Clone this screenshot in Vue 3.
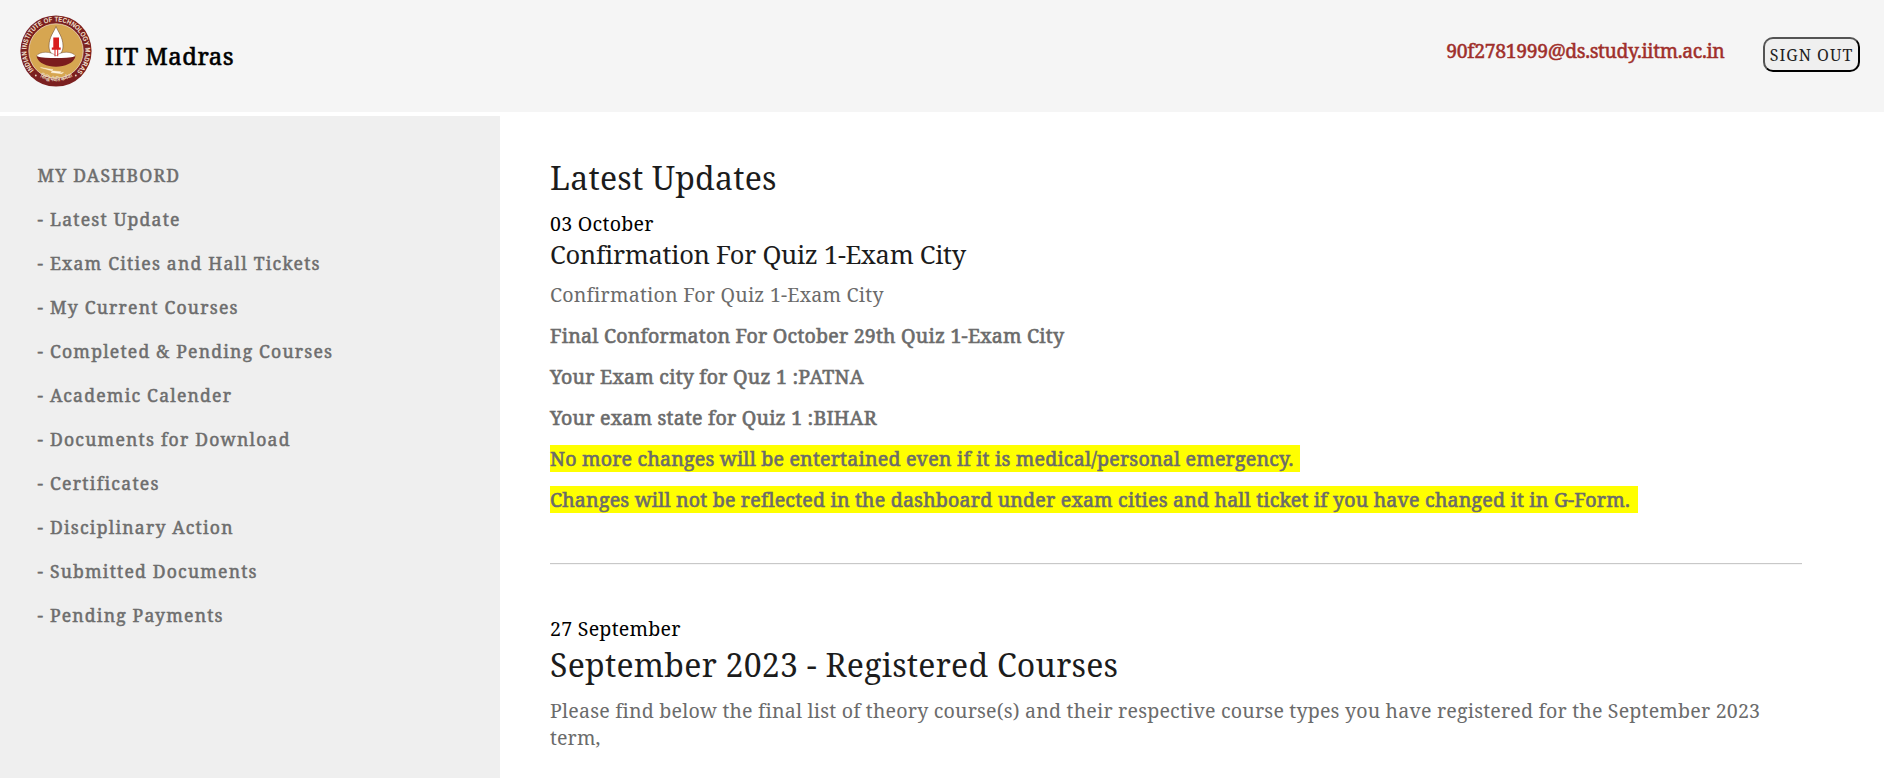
<script setup>
const menu = [
  { label: 'MY DASHBORD', width: 141.5 },
  { label: '- Latest Update', width: 142 },
  { label: '- Exam Cities and Hall Tickets', width: 282 },
  { label: '- My Current Courses', width: 200 },
  { label: '- Completed & Pending Courses', width: 294.5 },
  { label: '- Academic Calender', width: 193.5 },
  { label: '- Documents for Download', width: 252 },
  { label: '- Certificates', width: 120.5 },
  { label: '- Disciplinary Action', width: 195 },
  { label: '- Submitted Documents', width: 219 },
  { label: '- Pending Payments', width: 185 },
]

const notices = [
  { text: 'Confirmation For Quiz 1-Exam City', width: 333 },
  { text: 'Final Conformaton For October 29th Quiz 1-Exam City', width: 514, bold: true },
  { text: 'Your Exam city for Quz 1 :PATNA', width: 313.5, bold: true },
  { text: 'Your exam state for Quiz 1 :BIHAR', width: 326.5, bold: true },
  { text: 'No more changes will be entertained even if it is medical/personal emergency.', width: 743.5, bold: true, mark: 'short' },
  { text: 'Changes will not be reflected in the dashboard under exam cities and hall ticket if you have changed it in G-Form.', width: 1079.5, bold: true, mark: 'long' },
]

// Tracks the text so that it spans the given width.
const vFit = {
  mounted(el, { value }) {
    const range = document.createRange()
    range.selectNodeContents(el)
    const natural = range.getBoundingClientRect().width
    el.style.letterSpacing = (value - natural) / (el.textContent.length - 1) + 'px'
  },
}
</script>

<template>
  <div class="page">
    <header class="top">
      <div class="brand">
        <svg class="logo" viewBox="0 0 72 72" width="72" height="72">
          <defs>
            <path id="ring" d="M14.500 56A29.400 29.400 0 1 1 57.500 56" />
            <path id="ringLow" d="M18.500 61A31 31 0 0 0 53.500 61" />
          </defs>
          <circle cx="36" cy="36" r="35.600" fill="#7b2020" />
          <circle cx="36" cy="36" r="27.200" fill="#d6a651" stroke="#ead7bd" stroke-width=".8" />
          <text class="seal"><textPath href="#ring" startOffset="1" textLength="136" lengthAdjust="spacingAndGlyphs">INDIAN INSTITUTE OF TECHNOLOGY MADRAS</textPath></text>
          <text class="motto"><textPath href="#ringLow" startOffset="2" textLength="34" lengthAdjust="spacingAndGlyphs">सिद्धिर्भवति कर्मजा</textPath></text>
          <circle cx="15.800" cy="60.500" r=".9" fill="#ead7bd" />
          <circle cx="55.800" cy="60.500" r=".9" fill="#ead7bd" />
          <path d="M36 11.500C34 17 29 22 29 31c0 6 3 9 7 11 4-2 7-5 7-11 0-9-5-14-7-19.500z" fill="#fff" stroke="#5f3a22" stroke-width=".5" />
          <path d="M16.500 41c3-5 15-5 19.500 0 4.500-5 16.500-5 19.500 0l-8 4H24z" fill="#fff" stroke="#5f3a22" stroke-width=".4" />
          <path d="M16.500 41.500c10 2 29 2 39 0C52 55 20 55 16.500 41.500z" fill="#7b1d1d" />
          <path d="M33.300 22.500h5.700v10h1.700v2.200H38.200v6.500h-1v-6.500h-1.700v6.500h-1v-6.500H31.800v-2.200h1.500z" fill="#d81e1e" />
          <path d="M20.500 52.500l12.500 2.200-1.500 1 9.500 1-1.500 1.500 4-1-1.500 1.500-11-1.200 1.500-1.400z" fill="#fff4df" stroke="#fff4df" stroke-width=".4" />
        </svg>
        <div v-fit="128.5" class="name">IIT Madras</div>
      </div>
      <div class="account">
        <div v-fit="278.5" class="email">90f2781999@ds.study.iitm.ac.in</div>
        <button class="signout"><span v-fit="82.5">SIGN OUT</span></button>
      </div>
    </header>

    <div class="body">
      <nav class="side">
        <a v-for="item in menu" :key="item.label"><span v-fit="item.width">{{ item.label }}</span></a>
      </nav>
      <main class="content">
        <h1><span v-fit="226.5">Latest Updates</span></h1>
        <section class="update">
          <div class="date"><span v-fit="103.5">03 October</span></div>
          <h2><span v-fit="415.5">Confirmation For Quiz 1-Exam City</span></h2>
          <p v-for="n in notices" :key="n.text" :class="[{ bold: n.bold }, n.mark && 'mark', n.mark]"><span v-fit="n.width">{{ n.text }}</span></p>
        </section>
        <hr />
        <section class="update">
          <div class="date second"><span v-fit="130.5">27 September</span></div>
          <h1 class="courses"><span v-fit="568">September 2023 - Registered Courses</span></h1>
          <div class="para"><span v-fit="1209">Please find below the final list of theory course(s) and their respective course types you have registered for the September 2023</span></div>
          <div class="para"><span v-fit="50.5">term,</span></div>
        </section>
      </main>
    </div>
  </div>
</template>

<style>
body {
  margin: 0;
  background: #fff;
  overflow: hidden;
}
</style>

<style scoped>
.page {
  height: 778px;
  overflow: hidden;
  display: flex;
  flex-direction: column;
  gap: 4px;
  font-family: "Noto Serif", "Droid Serif", "DejaVu Serif Condensed", "DejaVu Serif", serif;
  font-stretch: condensed;
  font-size: 19.6px;
  line-height: 27px;
  white-space: nowrap;
  color: #000;
}
.top {
  box-sizing: border-box;
  height: 112px;
  flex: none;
  background: #f5f5f5;
  display: flex;
  justify-content: space-between;
  padding: 15px 24px 0 20px;
}
.brand {
  display: flex;
  gap: 13px;
}
.logo {
  display: block;
}
.seal {
  font: bold 7px "Liberation Sans", sans-serif;
  fill: #f3e3d0;
}
.motto {
  font: bold 6px "Noto Sans", sans-serif;
  fill: #ead7bd;
}
.name {
  font-size: 24px;
  line-height: 34px;
  margin-top: 24px;
  -webkit-text-stroke: 0.6px;
}
.account {
  display: flex;
  align-items: flex-start;
}
.email {
  color: #9f2f2b;
  font-size: 19.4px;
  margin: 22px 38.5px 0 0;
  -webkit-text-stroke: 0.5px;
}
.signout {
  box-sizing: border-box;
  width: 97px;
  height: 35px;
  margin-top: 22px;
  padding: 1px 0 0;
  border: 2px outset #000;
  border-radius: 10px;
  background: #efefef;
  color: #222;
  font: inherit;
  font-size: 16px;
}
.body {
  flex: 1;
  display: flex;
  min-height: 0;
}
.side {
  box-sizing: border-box;
  width: 500px;
  flex: none;
  background: #efefef;
  padding: 46px 0 0 37.5px;
  display: flex;
  flex-direction: column;
  gap: 17px;
  color: #6d6d6d;
  font-size: 17.6px;
  -webkit-text-stroke: 0.5px;
}
.content {
  width: 1252px;
  padding: 42px 0 0 50px;
}
h1,
h2,
p {
  margin: 0;
  font-weight: normal;
}
h1,
h2 {
  color: #1c1c1c;
}
h1 {
  font-size: 32px;
  line-height: 40px;
}
h2 {
  font-size: 25.5px;
  line-height: 34px;
  margin: 0 0 10px;
}
.date {
  margin-top: 12px;
}
.date.second {
  margin-top: 50px;
}
p {
  width: fit-content;
  margin-bottom: 14px;
  color: #6b6b6b;
}
.bold {
  -webkit-text-stroke: 0.6px;
}
.mark {
  background: #ff0;
}
.short {
  padding-right: 6.5px;
}
.long {
  padding-right: 8px;
}
hr {
  margin: 50px 0 0;
  border: 0;
  height: 1px;
  background: #c8c8c8;
  border-bottom: 1px solid #f6f6f6;
  background-clip: padding-box;
}
.courses {
  margin: 3px 0 12px;
}
.para {
  color: #6b6b6b;
}
</style>
